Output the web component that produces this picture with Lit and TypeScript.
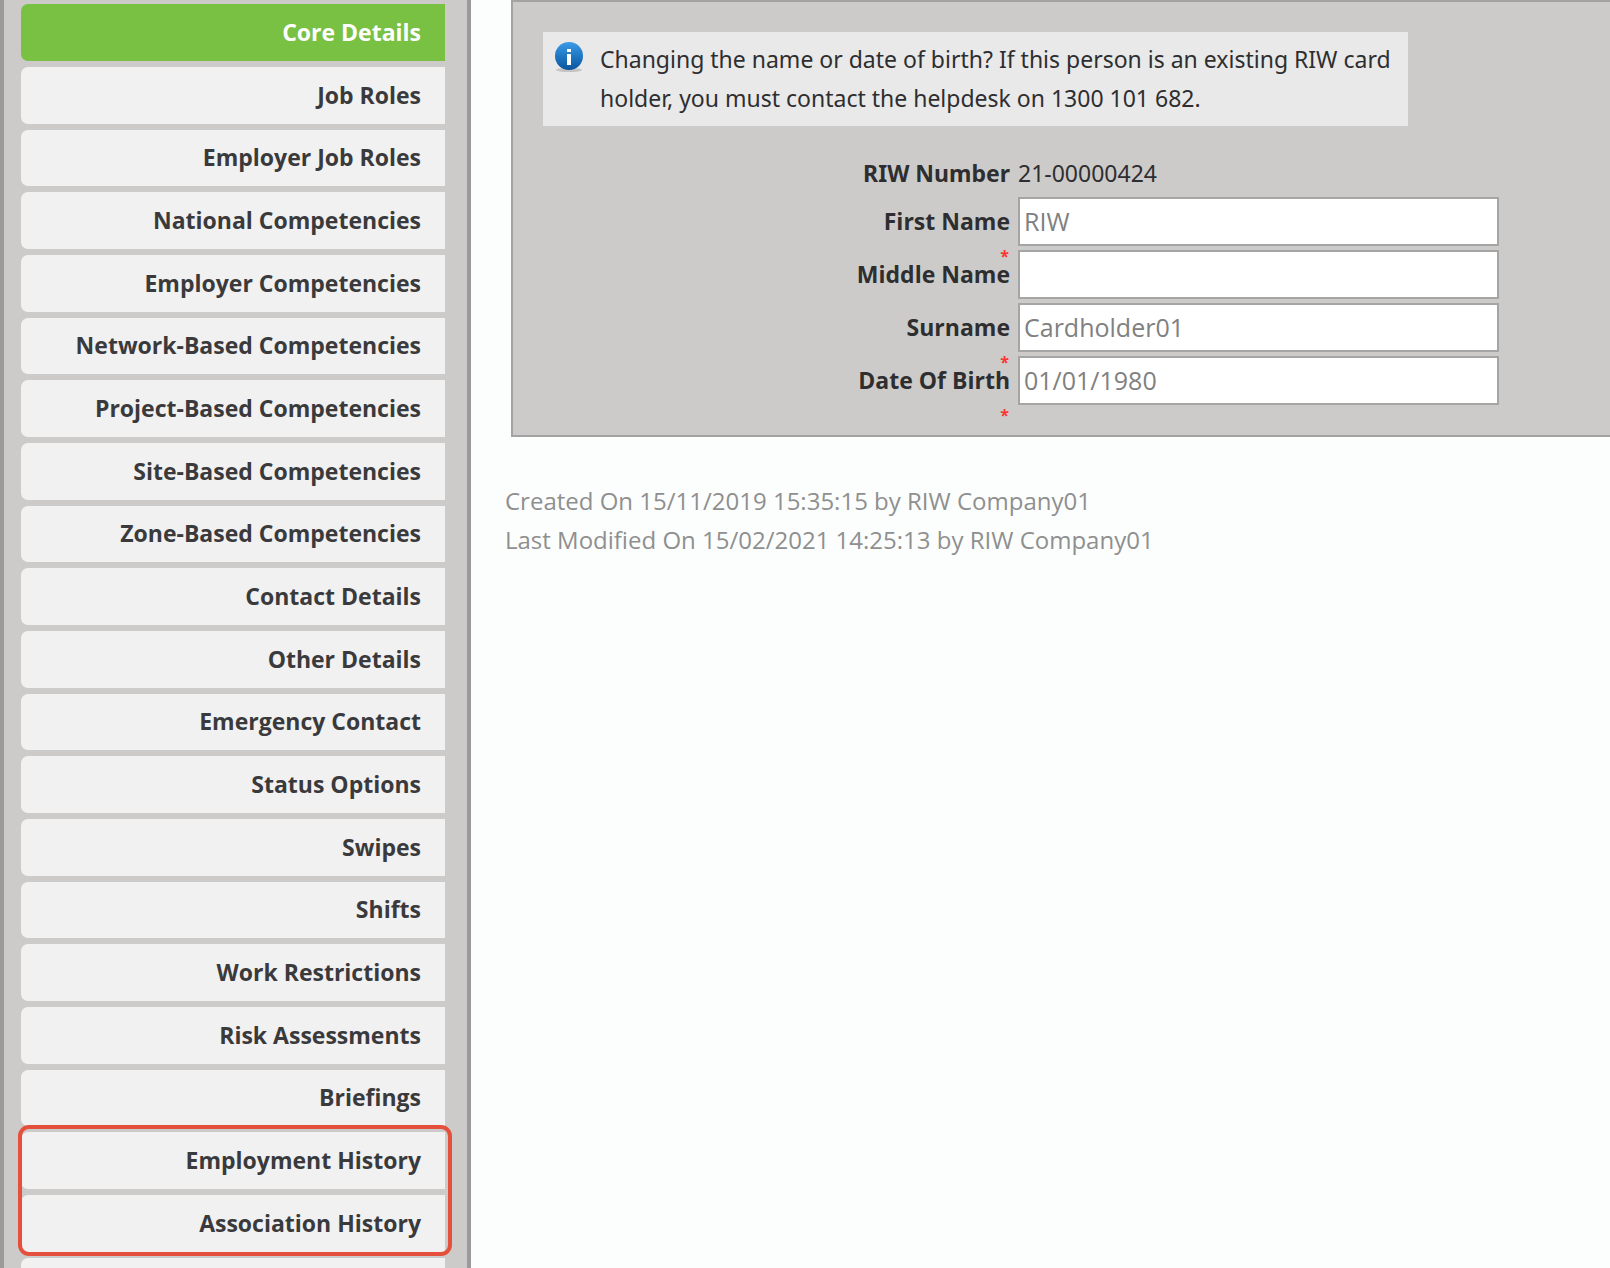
import { LitElement, html, css, nothing } from "lit";
import { customElement } from "lit/decorators.js";
import { classMap } from "lit/directives/class-map.js";

interface Field {
  id: string;
  label: string;
  value: string;
  required: boolean;
}

const SECTIONS = [
  "Core Details",
  "Job Roles",
  "Employer Job Roles",
  "National Competencies",
  "Employer Competencies",
  "Network-Based Competencies",
  "Project-Based Competencies",
  "Site-Based Competencies",
  "Zone-Based Competencies",
  "Contact Details",
  "Other Details",
  "Emergency Contact",
  "Status Options",
  "Swipes",
  "Shifts",
  "Work Restrictions",
  "Risk Assessments",
  "Briefings",
];

const HISTORY_SECTIONS = ["Employment History", "Association History"];

const FIELDS: Field[] = [
  { id: "first-name", label: "First Name", value: "RIW", required: true },
  { id: "middle-name", label: "Middle Name", value: "", required: false },
  { id: "surname", label: "Surname", value: "Cardholder01", required: true },
  { id: "birth-date", label: "Date Of Birth", value: "01/01/1980", required: true },
];

@customElement("section-nav")
export class SectionNav extends LitElement {
  static styles = css`
    :host {
      display: flex;
      flex-direction: column;
      box-sizing: border-box;
      padding: 4px 22px 0 17px;
      border-left: 4px solid #9a9a9a;
      border-right: 4px solid #9a9a9a;
      background: #cccbc9;
    }
    .list {
      flex: 1;
      display: flex;
      flex-direction: column;
      gap: 6px;
    }
    .item {
      display: flex;
      align-items: center;
      justify-content: flex-end;
      box-sizing: border-box;
      height: 57px;
      padding: 0 24px 2px 0;
      border-radius: 7px 0 0 7px;
      background: #f1f1f1;
      color: #3a3a3c;
      font-size: 23px;
      font-weight: 700;
      text-decoration: none;
    }
    .item:nth-child(3n) {
      height: 56px;
    }
    .active {
      background: #79c143;
      color: #fff;
    }
    .marked {
      position: relative;
      display: flex;
      flex-direction: column;
      gap: 6px;
    }
    .marked::after {
      content: "";
      position: absolute;
      inset: -7px -7px -4px -3px;
      border: 4px solid #e5503c;
      border-radius: 11px;
      pointer-events: none;
    }
    .rest {
      flex: 1;
      min-height: 8px;
      border-radius: 7px 0 0 0;
      background: #f1f1f1;
    }
  `;

  private link(name: string) {
    return html`<a
      class=${classMap({ item: true, active: name === SECTIONS[0] })}
      href="#"
      >${name}</a
    >`;
  }

  render() {
    return html`<nav class="list">
      ${SECTIONS.map((name) => this.link(name))}
      <div class="marked">${HISTORY_SECTIONS.map((name) => this.link(name))}</div>
      <div class="rest"></div>
    </nav>`;
  }
}

@customElement("core-details")
export class CoreDetails extends LitElement {
  static styles = css`
    :host {
      display: block;
    }
    .panel {
      padding: 30px;
      border: 2px solid #a3a3a3;
      border-right: 0;
      background: #cccbc9;
    }
    .notice {
      display: flex;
      gap: 16px;
      box-sizing: border-box;
      max-width: 865px;
      padding: 8px 0 8px 11px;
      background: #e9e9e9;
    }
    .icon {
      flex: none;
      width: 30px;
      height: 34px;
    }
    .message {
      margin: 0;
      font-family: "Noto Sans", sans-serif;
      line-height: 39px;
    }
    .form {
      display: grid;
      grid-template-columns: minmax(0, 467px) minmax(0, 481px);
      column-gap: 8px;
      row-gap: 4px;
      padding-top: 25px;
    }
    .caption {
      display: flex;
      flex-direction: column;
      align-items: flex-end;
      height: 49px;
      line-height: 49px;
      font-weight: 700;
    }
    .number {
      height: 42px;
      font-family: "Noto Sans", sans-serif;
      line-height: 44px;
    }
    .star {
      padding-right: 1px;
      color: #f33;
      font-size: 16px;
      line-height: 20px;
    }
    .input {
      box-sizing: border-box;
      width: 100%;
      height: 49px;
      margin: 0;
      padding: 0 4px 2px;
      border: 2px solid #a5a5a5;
      border-radius: 0;
      background: #fff;
      color: #808080;
      font: 25px "Open Sans", sans-serif;
    }
  `;

  render() {
    return html`
      <section class="panel">
        <div class="notice">
          <svg class="icon" viewBox="0 0 30 34" aria-hidden="true">
            <defs>
              <linearGradient id="ball" x1="0" y1="0" x2="0" y2="1">
                <stop offset="0" stop-color="#3d9be6" />
                <stop offset="0.5" stop-color="#1f78c4" />
                <stop offset="1" stop-color="#0a559c" />
              </linearGradient>
            </defs>
            <ellipse cx="15" cy="30" rx="13" ry="2" fill="#c4c4c4" />
            <circle cx="15" cy="16" r="14" fill="url(#ball)" />
            <rect x="13" y="9" width="4" height="3" fill="#fff" />
            <rect x="13" y="14" width="4" height="11" fill="#fff" />
          </svg>
          <p class="message">
            Changing the name or date of birth? If this person is an existing RIW card<br />holder,
            you must contact the helpdesk on 1300 101 682.
          </p>
        </div>
        <form class="form">
          <span class="caption number">RIW Number</span>
          <span class="number">21-00000424</span>
          ${FIELDS.map(
            (field) => html`
              <label class="caption" for=${field.id}>
                ${field.label}${field.required
                  ? html`<span class="star">*</span>`
                  : nothing}
              </label>
              <input
                class="input"
                id=${field.id}
                type="text"
                .value=${field.value}
                ?required=${field.required}
              />
            `
          )}
        </form>
      </section>
    `;
  }
}

@customElement("app-root")
export class AppRoot extends LitElement {
  static styles = css`
    :host {
      display: grid;
      grid-template-columns: 471px minmax(0, 1fr);
      min-height: 100vh;
      background: #fcfefd;
      color: #2e2e30;
      font: 23px "Open Sans", sans-serif;
    }
    .main {
      padding-left: 40px;
    }
    .history {
      margin: 44px 0 0 -6px;
      color: #8f8f8f;
      font-size: 24px;
      line-height: 39px;
    }
  `;

  render() {
    return html`
      <section-nav></section-nav>
      <main class="main">
        <core-details></core-details>
        <p class="history">
          Created On 15/11/2019 15:35:15 by RIW Company01<br />Last Modified On 15/02/2021 14:25:13
          by RIW Company01
        </p>
      </main>
    `;
  }
}
